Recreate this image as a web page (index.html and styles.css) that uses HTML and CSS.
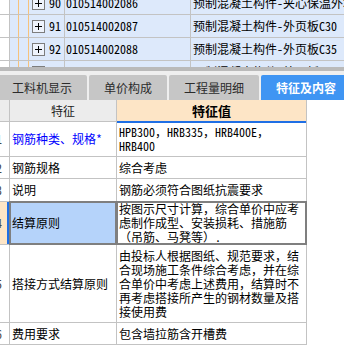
FILE: index.html
```html
<!DOCTYPE html>
<html lang="zh-CN">
<head>
    <meta charset="UTF-8">
    <meta name="viewport" content="width=device-width, initial-scale=1.0">
    <title>特征及内容</title>
    <link rel="stylesheet" href="styles.css">
</head>
<body>
    <!-- 清单列表 -->
    <div class="list">
        <div class="list-rows">
            <div class="list-row">
                <div class="lr-gutter"></div>
                <div class="lr-tree">
                    <i class="tl tl-a"></i><i class="tl tl-b"></i>
                    <svg class="expander" width="13" height="13" viewBox="0 0 13 13"><rect x="0.5" y="0.5" width="12" height="12" fill="#eef3fc" stroke="#7d7d7d"/><path d="M3 6.5h7M6.5 3v7" stroke="#000"/></svg>
                    <span class="lr-no">90</span>
                </div>
                <div class="lr-code">010514002086</div>
                <div class="lr-name">预制混凝土构件-夹心保温外墙板</div>
            </div>
            <div class="list-row">
                <div class="lr-gutter"></div>
                <div class="lr-tree">
                    <i class="tl tl-a"></i><i class="tl tl-b"></i>
                    <svg class="expander" width="13" height="13" viewBox="0 0 13 13"><rect x="0.5" y="0.5" width="12" height="12" fill="#eef3fc" stroke="#7d7d7d"/><path d="M3 6.5h7M6.5 3v7" stroke="#000"/></svg>
                    <span class="lr-no">91</span>
                </div>
                <div class="lr-code">010514002087</div>
                <div class="lr-name">预制混凝土构件-外页板C30</div>
            </div>
            <div class="list-row">
                <div class="lr-gutter"></div>
                <div class="lr-tree">
                    <i class="tl tl-a"></i><i class="tl tl-b"></i>
                    <svg class="expander" width="13" height="13" viewBox="0 0 13 13"><rect x="0.5" y="0.5" width="12" height="12" fill="#eef3fc" stroke="#7d7d7d"/><path d="M3 6.5h7M6.5 3v7" stroke="#000"/></svg>
                    <span class="lr-no">92</span>
                </div>
                <div class="lr-code">010514002088</div>
                <div class="lr-name">预制混凝土构件-外页板C35</div>
            </div>
            <div class="list-row">
                <div class="lr-gutter"></div>
                <div class="lr-tree">
                    <i class="tl tl-a"></i><i class="tl tl-b"></i>
                    <svg class="expander" width="13" height="13" viewBox="0 0 13 13"><rect x="0.5" y="0.5" width="12" height="12" fill="#eef3fc" stroke="#7d7d7d"/><path d="M3 6.5h7M6.5 3v7" stroke="#000"/></svg>
                    <span class="lr-no">93</span>
                </div>
                <div class="lr-code">010514002089</div>
                <div class="lr-name">预制混凝土构件-外页板C40</div>
            </div>
        </div>
    </div>

    <div class="splitter"></div>

    <!-- 页签 -->
    <div class="tabs">
        <div class="tab">工料机显示</div>
        <div class="tab">单价构成</div>
        <div class="tab">工程量明细</div>
        <div class="tab active">特征及内容</div>
    </div>

    <!-- 特征表 -->
    <div class="sheet">
        <div class="rn rn-head"></div>
        <div class="hd hd-name">特征</div>
        <div class="hd hd-value">特征值</div>

        <div class="rn"><span>1</span></div>
        <div class="cell cell-key">钢筋种类、规格*</div>
        <div class="cell">HPB300，HRB335，HRB400E，HRB400</div>

        <div class="rn"><span>2</span></div>
        <div class="cell">钢筋规格</div>
        <div class="cell">综合考虑</div>

        <div class="rn"><span>3</span></div>
        <div class="cell">说明</div>
        <div class="cell">钢筋必须符合图纸抗震要求</div>

        <div class="rn rn-current"><span>4</span></div>
        <div class="cell current focus">结算原则</div>
        <div class="cell current">按图示尺寸计算，综合单价中应考虑制作成型、安装损耗、措施筋（吊筋、马凳等）.</div>

        <div class="rn"><span>5</span></div>
        <div class="cell">搭接方式结算原则</div>
        <div class="cell">由投标人根据图纸、规范要求，结合现场施工条件综合考虑，并在综合单价中考虑上述费用，结算时不再考虑搭接所产生的钢材数量及搭接使用费</div>

        <div class="rn"><span>6</span></div>
        <div class="cell">费用要求</div>
        <div class="cell">包含墙拉筋含开槽费</div>
    </div>
</body>
</html>
```

FILE: styles.css
```css
/* 通用 */
* {
    box-sizing: border-box;
    margin: 0;
    padding: 0;
}

body {
    width: 344px;
    height: 355px;
    overflow: hidden;
    background: #fff;
    color: #000;
    font-family: "Noto Sans Mono CJK SC", "Noto Sans CJK SC", "Liberation Mono", monospace;
    font-size: 12px;
    line-height: 14px;
}

/* 清单列表 */
.list {
    height: 67px;
    overflow: hidden;
    background: #dde9fb;
}

.list-rows {
    margin-top: -8px;
}

.list-row {
    display: flex;
    height: 23px;
    border-bottom: 1px solid #c3c3c3;
}

.lr-gutter {
    width: 10px;
    background: #fff;
    border-right: 1px solid #c3c3c3;
}

.lr-tree {
    display: flex;
    align-items: center;
    width: 55px;
    padding-left: 8px;
    border-right: 1px solid #c3c3c3;
}

.tl {
    align-self: stretch;
    border-left: 1px solid #f6c27c;
}

.tl-a {
    width: 10px;
}

.tl-b {
    width: 4px;
}

.expander {
    display: block;
}

.lr-no {
    margin-left: 4px;
}

.lr-code {
    display: flex;
    align-items: center;
    width: 126px;
    padding-left: 1px;
    border-right: 1px solid #c3c3c3;
}

.lr-name {
    flex: 1;
    display: flex;
    align-items: center;
    padding-left: 2px;
    white-space: nowrap;
    overflow: hidden;
}

.splitter {
    height: 4px;
    background: #bababa;
}

/* 页签 */
.tabs {
    display: flex;
    gap: 2px;
    height: 29px;
    padding-top: 4px;
    margin-left: -3px;
    background: #efefef;
    overflow: hidden;
}

.tab {
    flex-shrink: 0;
    display: flex;
    align-items: center;
    padding: 0 15px;
    background: #c6c6c6;
    border-radius: 2px 2px 0 0;
    color: #2b2b2b;
    font-family: "Noto Sans CJK SC", sans-serif;
    font-size: 12px;
}

.tab.active {
    background: #3f95f3;
    color: #fff;
    font-weight: bold;
}

/* 特征表 */
.sheet {
    display: grid;
    grid-template-columns: 9px 106px 189px;
    grid-template-rows: 21px 34px 21px 22px 42px 77px 21px;
    gap: 1px;
    width: max-content;
    padding: 0 1px 1px 0;
    background: #c3c3c3;
}

.rn {
    display: flex;
    align-items: center;
    overflow: hidden;
    background: #fff;
    color: #444;
}

.rn span {
    margin-left: -4px;
}

.rn-head {
    background: #ececec;
}

.rn-current {
    background: #fde5c6;
    box-shadow: inset -2px 0 0 #1f6fe5;
}

.hd {
    display: flex;
    align-items: center;
    justify-content: center;
    font-family: "Noto Sans CJK SC", sans-serif;
}

.hd-name {
    background: #ececec;
    color: #222;
}

.hd-value {
    position: relative;
    z-index: 1;
    background: #fde5c6;
    font-size: 13px;
    font-weight: bold;
    box-shadow: 0 2px 0 #1f6fe5;
}

.cell {
    display: flex;
    align-items: center;
    padding: 0 2px;
    background: #fff;
}

.cell-key {
    color: #0000ff;
}

.current {
    outline: 2px solid #7f7f7f;
    outline-offset: -1px;
}

.focus {
    background: #b5d3fa;
}
```
